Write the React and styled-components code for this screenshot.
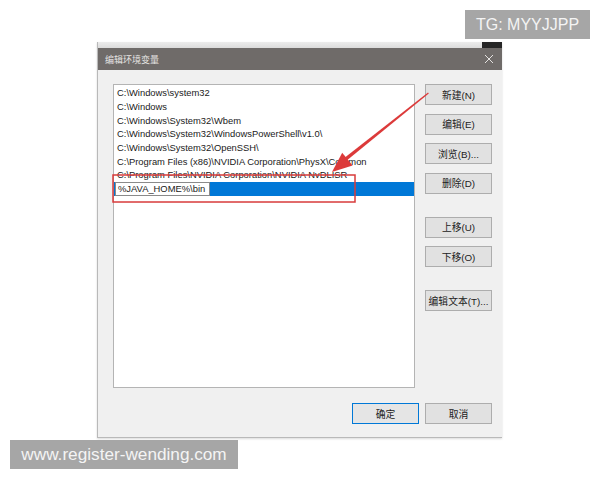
import React from "react";
import styled, { createGlobalStyle } from "styled-components";

const GlobalStyle = createGlobalStyle`
  html, body { margin: 0; padding: 0; background: #fff; }
  body { font-family: "Liberation Sans", "Noto Sans CJK SC", sans-serif; }
`;

const Page = styled.div`
  position: relative;
  width: 600px;
  height: 480px;
  overflow: hidden;
  background: #fff;
  padding: 42px 0 0 97px;
  box-sizing: border-box;
`;

const Dialog = styled.div`
  width: 405px;
  height: 396px;
  display: flex;
  flex-direction: column;
  border-left: 1px solid #b9b9b9;
  border-bottom: 1px solid #b9b9b9;
  box-shadow: 0 1px 2px rgba(0, 0, 0, 0.15);
  box-sizing: border-box;
`;

const TopStrip = styled.div`
  height: 6px;
  display: flex;
  background: linear-gradient(#ececec, #dcdcdc);
`;

const DarkCorner = styled.div`
  margin-left: auto;
  width: 20px;
  background: #262626;
`;

const TitleBar = styled.div`
  height: 22px;
  background: #6f6b69;
  display: flex;
  align-items: center;
  justify-content: space-between;
  padding: 0 8px 0 7px;
  color: #e6e4e2;
  font-family: "Noto Sans CJK SC", sans-serif;
  font-size: 9px;
`;

const CloseIcon = () => (
  <svg width="10" height="10" viewBox="0 0 10 10">
    <path d="M1 1L9 9M9 1L1 9" stroke="#e4e2e0" strokeWidth="1" />
  </svg>
);

const Body = styled.div`
  flex: 1;
  background: #f0f0f0;
  display: grid;
  grid-template-columns: 302px 67px;
  grid-template-rows: 304px auto;
  column-gap: 10px;
  row-gap: 15px;
  padding: 14px 10px 0 15px;
`;

const ListBox = styled.div`
  background: #fff;
  border: 1px solid #b4b4b4;
  padding-top: 1px;
  box-sizing: border-box;
`;

const Row = styled.div`
  height: 13.7px;
  display: flex;
  align-items: center;
  padding-left: 3px;
  font-size: 9.4px;
  color: #1a1a1a;
  white-space: nowrap;
  background: ${(p) => (p.$selected ? "#0078d7" : "transparent")};
`;

const EditField = styled.div`
  width: 95px;
  height: 13.7px;
  margin-left: -2px;
  background: #fff;
  border: 1px solid #8a8a8a;
  box-sizing: border-box;
  display: flex;
  align-items: center;
  padding-left: 2px;
  font-size: 9.4px;
  color: #1a1a1a;
`;

const SideButtons = styled.div`
  display: flex;
  flex-direction: column;
  gap: 8.5px;
`;

const Button = styled.button`
  height: 21px;
  width: 67px;
  margin-top: ${(p) => (p.$sep ? "14.5px" : "0")};
  background: ${(p) => (p.$primary ? "#e5e5e5" : "#e1e1e1")};
  border: 1px solid ${(p) => (p.$primary ? "#0078d7" : "#adadad")};
  padding: 0;
  font-family: "Liberation Sans", "Noto Sans CJK SC", sans-serif;
  font-size: 9.8px;
  color: #222;
  box-sizing: border-box;
`;

const Footer = styled.div`
  grid-column: 1 / 3;
  display: flex;
  justify-content: flex-end;
  gap: 6px;
`;

const Tag = styled.div`
  position: absolute;
  background: #a6a6a6;
  color: #f4f4f4;
  font-family: "Liberation Sans", sans-serif;
  font-size: ${(p) => p.$size};
  display: flex;
  align-items: center;
  justify-content: center;
  box-sizing: border-box;
`;

const TopTag = styled(Tag)`
  top: 10px;
  left: 465px;
  width: 125px;
  height: 29px;
`;

const BottomTag = styled(Tag)`
  top: 440px;
  left: 10px;
  width: 228px;
  height: 29px;
`;

const Overlay = styled.svg`
  position: absolute;
  left: 0;
  top: 0;
  pointer-events: none;
`;

const paths = [
  "C:\\Windows\\system32",
  "C:\\Windows",
  "C:\\Windows\\System32\\Wbem",
  "C:\\Windows\\System32\\WindowsPowerShell\\v1.0\\",
  "C:\\Windows\\System32\\OpenSSH\\",
  "C:\\Program Files (x86)\\NVIDIA Corporation\\PhysX\\Common",
  "C:\\Program Files\\NVIDIA Corporation\\NVIDIA NvDLISR",
];

const sideActions = [
  { label: "新建(N)" },
  { label: "编辑(E)" },
  { label: "浏览(B)..." },
  { label: "删除(D)" },
  { label: "上移(U)", sep: true },
  { label: "下移(O)" },
  { label: "编辑文本(T)...", sep: true },
];

export default function App() {
  return (
    <Page>
      <GlobalStyle />
      <Dialog>
        <TopStrip>
          <DarkCorner />
        </TopStrip>
        <TitleBar>
          <span>编辑环境变量</span>
          <CloseIcon />
        </TitleBar>
        <Body>
          <ListBox>
            {paths.map((p) => (
              <Row key={p}>{p}</Row>
            ))}
            <Row $selected>
              <EditField>%JAVA_HOME%\bin</EditField>
            </Row>
          </ListBox>
          <SideButtons>
            {sideActions.map((a) => (
              <Button key={a.label} $sep={a.sep}>
                {a.label}
              </Button>
            ))}
          </SideButtons>
          <Footer>
            <Button $primary>确定</Button>
            <Button>取消</Button>
          </Footer>
        </Body>
      </Dialog>

      {/* red markup: box round the new entry and an arrow from the New button */}
      <Overlay width="600" height="480" viewBox="0 0 600 480">
        <rect x="113" y="175" width="242" height="27" fill="none" stroke="#d83b3b" strokeWidth="1.5" />
        <polygon points="428,92.5 428.8,93.6 345.5,161.5 343.3,158.7" fill="#dc3a3a" />
        <polygon points="332,172 342.2,152.8 352.6,165.4" fill="#dc3a3a" />
      </Overlay>

      <TopTag $size="16px">TG: MYYJJPP</TopTag>
      <BottomTag $size="17.2px">www.register-wending.com</BottomTag>
    </Page>
  );
}
